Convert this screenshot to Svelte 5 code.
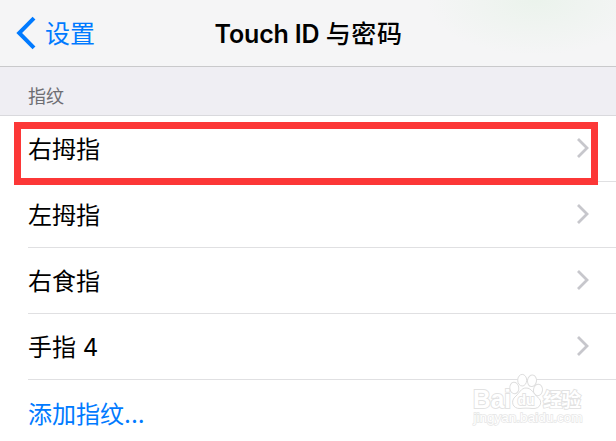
<script lang="ts">
  const fingerprints = ["右拇指", "左拇指", "右食指", "手指 4"];
</script>

<main>
  <header>
    <div class="back">
      <svg width="20" height="34" viewBox="0 0 20 34">
        <path d="M18 2.2 L3.2 17 L18 31.8" />
      </svg>
      <span>设置</span>
    </div>
    <h1>Touch ID <span>与密码</span></h1>
  </header>

  <div class="section-title">指纹</div>

  <div class="list">
    {#each fingerprints as fingerprint}
      <div class="row">
        <span>{fingerprint}</span>
        <svg class="chevron" width="14" height="22" viewBox="0 0 14 22">
          <path d="M2 2 L11 11 L2 20" />
        </svg>
      </div>
    {/each}
    <div class="row add"><span>添加指纹...</span></div>
  </div>

  <div class="highlight"></div>

  <svg class="watermark" width="120" height="64" viewBox="0 0 120 64">
    <g class="outline">
      <text x="3" y="34.5" font-size="25" font-weight="700" textLength="38" lengthAdjust="spacingAndGlyphs">Bai</text>
      <text class="cjk" x="73" y="33.5" font-size="19.5" font-weight="700" textLength="38">经验</text>
      <text class="url" x="3.5" y="49" font-size="13" textLength="109" lengthAdjust="spacingAndGlyphs">jingyan.baidu.com</text>
    </g>
    <g class="paw">
      <ellipse cx="44.3" cy="15" rx="4.5" ry="5.8" transform="rotate(-8 44.3 15)" />
      <ellipse cx="52.2" cy="7.2" rx="4.5" ry="5.8" />
      <ellipse cx="62" cy="7.8" rx="4.5" ry="5.8" transform="rotate(8 62 7.8)" />
      <ellipse cx="68" cy="17" rx="4.5" ry="5.8" transform="rotate(8 68 17)" />
      <path d="M56 15 C51 15 49.5 20 46 23 C39.5 28 43 36 50 35.5 C54 35 58 35 62 35.5 C71 36.5 73 28 68 24.5 C63 20.5 62 15 56 15 Z" />
    </g>
    <text class="outline" x="47.5" y="31.5" font-size="15.5" font-weight="700" textLength="17" lengthAdjust="spacingAndGlyphs">du</text>
  </svg>
</main>

<style>
  :global(body) {
    margin: 0;
  }
  main {
    position: relative;
    box-sizing: border-box;
    width: 616px;
    height: 441px;
    overflow: hidden;
    background-color: #fff;
    color: #000;
    font-family: Inter, "Noto Sans CJK SC", sans-serif;
  }
  header {
    box-sizing: border-box;
    display: grid;
    grid-template-columns: 1fr auto 1fr;
    align-items: center;
    height: 67px;
    border-bottom: 1px solid #c9c9cb;
    background: radial-gradient(ellipse 110px 55px at 536px 0, #ebf3ec, transparent), #f5f5f6;
  }
  .back {
    display: flex;
    align-items: center;
    gap: 9px;
    padding-left: 16px;
    color: #007aff;
    font-size: 25px;
    line-height: 36px;
  }
  .back span {
    padding-top: 2px;
  }
  .back svg {
    fill: none;
    stroke: #007aff;
    stroke-width: 4;
  }
  h1 {
    margin: 0;
    padding: 1px 0 0 1px;
    font-size: 25px;
    font-weight: 600;
    letter-spacing: -0.15px;
    line-height: 36px;
  }
  h1 span {
    font-weight: 500;
    letter-spacing: 0.6px;
  }
  .section-title {
    box-sizing: border-box;
    height: 49px;
    padding: 17px 0 0 28px;
    border-bottom: 1px solid #d9d9dd;
    background-color: #efeef3;
    color: #6d6d72;
    font-size: 18px;
    line-height: 26px;
  }
  .row {
    box-sizing: border-box;
    display: flex;
    align-items: center;
    justify-content: space-between;
    height: 66px;
    margin-left: 28px;
    padding-right: 26px;
    border-bottom: 1px solid #e0e0e2;
    font-size: 24px;
    line-height: 36px;
  }
  .row span {
    padding-top: 3px;
  }
  .add {
    border-bottom: none;
    color: #007aff;
  }
  .chevron {
    margin-bottom: 2px;
    fill: none;
    stroke: #c7c7cc;
    stroke-width: 2.8;
  }
  .highlight {
    position: absolute;
    top: 122px;
    left: 14px;
    box-sizing: border-box;
    width: 584px;
    height: 63px;
    border: 7px solid #fc3737;
  }
  .watermark {
    position: absolute;
    top: 373px;
    left: 470px;
    font-family: "Liberation Sans", sans-serif;
  }
  .outline {
    fill: #fff;
    stroke: #e2e2e2;
    stroke-width: 1.8;
    paint-order: stroke;
  }
  .url {
    stroke: #e6e6e6;
    stroke-width: 1.4;
  }
  .paw {
    fill: #fff;
    stroke: #dedede;
    stroke-width: 1;
  }
  .cjk {
    font-family: "Noto Sans CJK SC", sans-serif;
  }
</style>
